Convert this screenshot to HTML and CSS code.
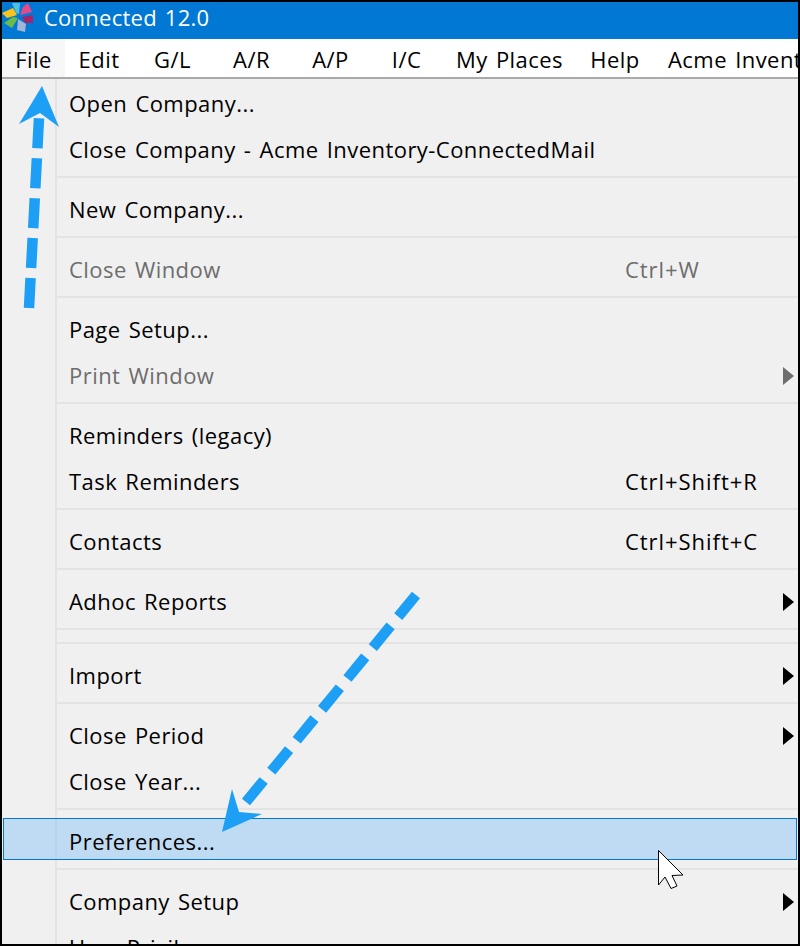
FILE: index.html
```html
<!DOCTYPE html>
<html lang="en">
<head>
  <meta charset="UTF-8" />
  <title>Connected 12.0</title>
  <link rel="stylesheet" href="styles.css">
</head>
<body>
  <div class="window">
    <div class="title-bar">
      <svg class="logo" width="36" height="36" viewBox="0 0 36 36">
        <polygon points="2,13 13,8 17,15 7,18" fill="#fcc419"/>
        <polygon points="12,3 20,3 19,14 16,13" fill="#4fc0e0"/>
        <polygon points="28,3 32,12 20,15 23,7" fill="#e8488a"/>
        <polygon points="22,17 33,15 33,23 25,23" fill="#a3246b"/>
        <polygon points="13,17 18,18 12,28 4,23" fill="#6cbb45"/>
        <polygon points="18,19 26,24 25,32 17,30" fill="#a3b5d6"/>
      </svg>
      <span>Connected 12.0</span>
    </div>
    <div class="menu-bar">
      <span class="menu-title active">File</span>
      <span class="menu-title">Edit</span>
      <span class="menu-title">G/L</span>
      <span class="menu-title">A/R</span>
      <span class="menu-title">A/P</span>
      <span class="menu-title">I/C</span>
      <span class="menu-title">My Places</span>
      <span class="menu-title">Help</span>
      <span class="menu-title last">Acme Inventory</span>
    </div>
    <div class="menu">
      <div class="group">
        <div class="item">Open Company...</div>
        <div class="item">Close Company - Acme Inventory-ConnectedMail</div>
      </div>
      <div class="group">
        <div class="item">New Company...</div>
      </div>
      <div class="group">
        <div class="item disabled">Close Window<span class="shortcut">Ctrl+W</span></div>
      </div>
      <div class="group">
        <div class="item">Page Setup...</div>
        <div class="item disabled">Print Window<span class="submenu"></span></div>
      </div>
      <div class="group">
        <div class="item">Reminders (legacy)</div>
        <div class="item">Task Reminders<span class="shortcut">Ctrl+Shift+R</span></div>
      </div>
      <div class="group">
        <div class="item">Contacts<span class="shortcut">Ctrl+Shift+C</span></div>
      </div>
      <div class="group">
        <div class="item">Adhoc Reports<span class="submenu"></span></div>
      </div>
      <div class="group empty"></div>
      <div class="group">
        <div class="item">Import<span class="submenu"></span></div>
      </div>
      <div class="group">
        <div class="item">Close Period<span class="submenu"></span></div>
        <div class="item">Close Year...</div>
      </div>
      <div class="group">
        <div class="item selected">Preferences...</div>
      </div>
      <div class="group">
        <div class="item">Company Setup<span class="submenu"></span></div>
        <div class="item">User Privileges</div>
      </div>
    </div>

    <svg class="overlay" width="800" height="946" viewBox="0 0 800 946">
      <line class="dash up" x1="29" y1="308" x2="39" y2="118"/>
      <polygon class="head" points="42,86 59,127 40,113 19,124"/>
      <line class="dash down" x1="416" y1="595" x2="246" y2="802"/>
      <polygon class="head" points="222,832 232,789 239,812 262,814"/>
      <polygon class="cursor" points="658.5,850.5 683,875 672,875.5 677,886 671,888.5 665,877 658.5,885"/>
    </svg>
  </div>
</body>
</html>
```

FILE: styles.css
```css
* {
  box-sizing: border-box;
  margin: 0;
  padding: 0;
}
html, body {
  height: 946px;
  overflow: hidden;
}
body {
  font-family: 'Open Sans', 'Noto Sans', sans-serif;
  font-size: 22px;
  letter-spacing: 0.45px;
  word-spacing: 2px;
  color: #000;
  background: #000;
}
.window {
  position: relative;
  width: 800px;
  height: 946px;
  border: 2px solid #000;
  overflow: hidden;
  background: #f0f0f0;
}
.title-bar {
  display: flex;
  align-items: center;
  height: 37px;
  background: #0078d4;
  color: #fff;
  padding: 0 0 8px 42px;
  letter-spacing: 0.25px;
}
.logo {
  position: absolute;
  left: -2px;
  top: -2px;
}
.menu-bar {
  display: grid;
  grid-template-columns: 63px 68px 79px 79px 79px 73px 133px 78px auto;
  height: 40px;
  background: #fff;
  border-bottom: 2px solid #a9a9a9;
  white-space: nowrap;
}
.menu-title {
  height: 38px;
  text-align: center;
  line-height: 40px;
}
.menu-title.active {
  background: #f7f7f7;
}
.menu-title.last {
  padding-left: 14px;
  text-align: left;
}
.menu {
  padding-top: 2px;
  background: linear-gradient(to right, transparent 53px, #e3e3e3 53px, #e3e3e3 55px, transparent 55px) no-repeat;
}
.group {
  margin-left: 55px;
  padding: 9px 0 3px;
  border-bottom: 2px solid #e3e3e3;
}
.group:first-child {
  padding-top: 0;
}
.group.empty {
  padding: 12px 0 0;
}
.item {
  position: relative;
  height: 46px;
  line-height: 44px;
  padding-left: 12px;
  white-space: nowrap;
}
.disabled {
  color: #6d6d6d;
}
.shortcut {
  position: absolute;
  left: 568px;
  top: 0;
  letter-spacing: 0.95px;
}
.submenu {
  position: absolute;
  right: 4px;
  top: 14px;
  border-left: 11px solid currentColor;
  border-top: 9px solid transparent;
  border-bottom: 9px solid transparent;
}
.selected {
  height: 42px;
  line-height: 44px;
  margin: -1px 1px 5px -54px;
  padding-left: 65px;
  background: rgba(141, 197, 245, 0.5);
  border: 1px solid #0078d7;
}
.overlay {
  position: absolute;
  left: -2px;
  top: -2px;
}
.dash {
  stroke: #1c9ff5;
  stroke-width: 10.5;
}
.dash.up {
  stroke-dasharray: 30 10;
}
.dash.down {
  stroke-dasharray: 28 12;
}
.head {
  fill: #1c9ff5;
}
.cursor {
  fill: #fff;
  stroke: #000;
  stroke-width: 1;
}
```
